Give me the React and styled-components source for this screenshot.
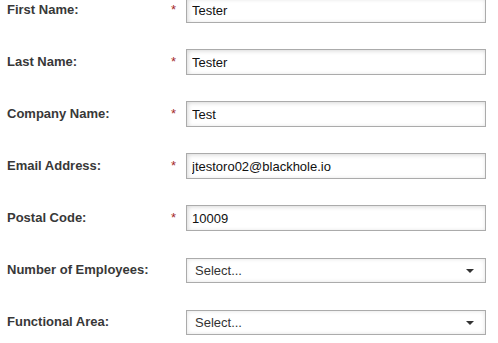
import { createGlobalStyle, styled } from "styled-components";

const GlobalStyle = createGlobalStyle`
  html, body {
    margin: 0;
    padding: 0;
    background: #fff;
  }
  body {
    font-family: "Liberation Sans", Arial, sans-serif;
  }
`;

const fields = [
  { label: "First Name:", value: "Tester", required: true },
  { label: "Last Name:", value: "Tester", required: true },
  { label: "Company Name:", value: "Test", required: true },
  { label: "Email Address:", value: "jtestoro02@blackhole.io", required: true },
  { label: "Postal Code:", value: "10009", required: true },
  { label: "Number of Employees:", select: true },
  { label: "Functional Area:", select: true },
];

export default function App() {
  return (
    <>
      <GlobalStyle />
      <Form>
        {fields.map((f) => (
          <Row key={f.label}>
            <Label>{f.label}</Label>
            <Required>{f.required ? "*" : ""}</Required>
            {f.select ? (
              <SelectWrap>
                <Select defaultValue="">
                  <option value="">Select...</option>
                </Select>
                <Arrow width="8" height="4" viewBox="0 0 8 4">
                  <path d="M0 0h8L4 4z" fill="#333" />
                </Arrow>
              </SelectWrap>
            ) : (
              <Input defaultValue={f.value} />
            )}
          </Row>
        ))}
      </Form>
    </>
  );
}

const Form = styled.form`
  display: grid;
  row-gap: 26px;
  margin-top: -3px;
  padding-left: 7px;
`;

const Row = styled.div`
  display: grid;
  grid-template-columns: 164px 15px 300px;
  align-items: center;
  height: 26px;
`;

const Label = styled.label`
  font-size: 13px;
  font-weight: bold;
  color: #383838;
  margin-top: -1px;
`;

const Required = styled.span`
  align-self: start;
  padding-top: 5px;
  font-size: 13px;
  color: #a52a2a;
`;

const Input = styled.input`
  box-sizing: border-box;
  width: 300px;
  height: 26px;
  margin: 0;
  padding: 0 5px;
  border: 1px solid #ababab;
  background: #fff;
  box-shadow: inset 1px 1px 4px rgba(0, 0, 0, 0.16);
  font-family: "Liberation Sans", Arial, sans-serif;
  font-size: 13px;
  color: #111;
  outline: none;
`;

const SelectWrap = styled.div`
  position: relative;
  width: 300px;
  height: 25px;
`;

const Select = styled.select`
  box-sizing: border-box;
  width: 100%;
  height: 100%;
  margin: 0;
  padding: 0 8px;
  appearance: none;
  border: 1px solid #ababab;
  border-radius: 0;
  background: #fff;
  box-shadow: inset 0 0 4px rgba(0, 0, 0, 0.12);
  font-family: "Liberation Sans", Arial, sans-serif;
  font-size: 13px;
  color: #333;
  outline: none;
`;

const Arrow = styled.svg`
  position: absolute;
  right: 12px;
  top: 11px;
  pointer-events: none;
`;
